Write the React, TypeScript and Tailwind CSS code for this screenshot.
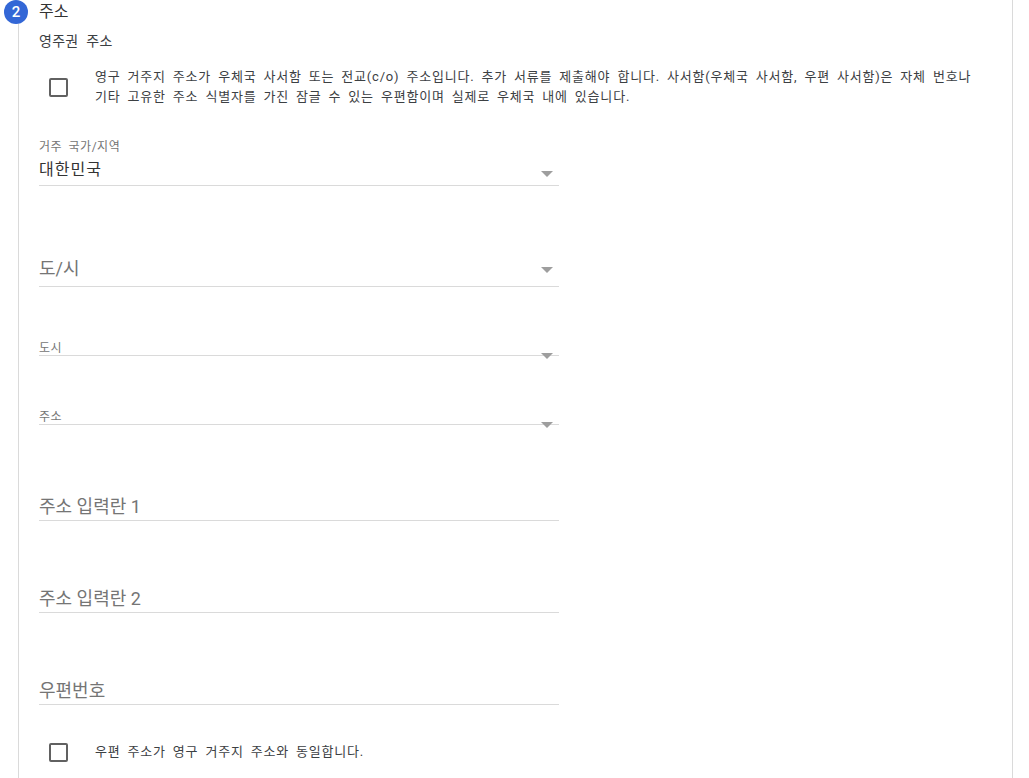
import React from "react";

const FONT = { fontFamily: 'Roboto, "Noto Sans CJK KR", sans-serif' };

function Arrow({ className = "" }: { className?: string }) {
  return (
    <svg
      width="12"
      height="6"
      viewBox="0 0 12 6"
      className={`absolute right-[6px] ${className}`}
    >
      <path d="M0 0 L12 0 L6 6 Z" fill="#9e9e9e" />
    </svg>
  );
}

function Checkbox() {
  return (
    <span className="block h-[19px] w-[19px] shrink-0 rounded-[2px] border-2 border-[#616161] bg-white" />
  );
}

// small floating label, as on a filled select
function Label({ text, className = "" }: { text: string; className?: string }) {
  return (
    <div
      className={`text-[12px] tracking-[0.5px] text-[#757575] [word-spacing:3px] ${className}`}
    >
      {text}
    </div>
  );
}

function SelectField({
  label,
  value,
  className = "",
}: {
  label: string;
  value: string;
  className?: string;
}) {
  return (
    <div
      className={`relative w-[520px] border-b border-[#dadada] pb-[3px] ${className}`}
    >
      <Label text={label} className="leading-4" />
      <div className="mt-[3px] text-[16px] leading-6 tracking-[1px] text-[#333]">
        {value}
      </div>
      <Arrow className="top-[32px]" />
    </div>
  );
}

function PlaceholderSelect({
  text,
  className = "",
}: {
  text: string;
  className?: string;
}) {
  return (
    <div
      className={`relative w-[520px] border-b border-[#dadada] pb-[5px] ${className}`}
    >
      <div className="text-[18px] leading-6 text-[#757575]">{text}</div>
      <Arrow className="top-[10px]" />
    </div>
  );
}

function LabelOnlySelect({
  label,
  className = "",
}: {
  label: string;
  className?: string;
}) {
  return (
    <div className={`relative w-[520px] border-b border-[#dadada] ${className}`}>
      <Label text={label} className="pt-[3px] leading-[13px]" />
      <Arrow className="top-[14px]" />
    </div>
  );
}

function TextField({
  placeholder,
  className = "",
}: {
  placeholder: string;
  className?: string;
}) {
  return (
    <div
      className={`w-[520px] border-b border-[#dadada] pb-[1px] text-[18px] leading-6 text-[#757575] ${className}`}
    >
      {placeholder}
    </div>
  );
}

export default function App() {
  return (
    <div className="h-[778px] w-[1029px] overflow-hidden bg-white" style={FONT}>
      <div className="h-[778px] w-[1013px] border-r border-[#dadada]">
        {/* step header */}
        <div className="flex h-6 items-center">
          <span className="ml-[4px] flex h-6 w-6 items-center justify-center rounded-full bg-[#3367d6] text-[15px] font-medium text-white">
            2
          </span>
          <span className="ml-[11px] text-[16px] text-[#333]">주소</span>
        </div>

        <div className="ml-[18px] border-l border-[#dadada] pb-10 pl-[20px]">
          <div className="pt-[7px] text-[14px] leading-5 tracking-[0.3px] text-[#3c4043] [word-spacing:4px]">
            영주권 주소
          </div>

          <div className="mt-4 flex items-center">
            <div className="pl-[10px]">
              <Checkbox />
            </div>
            <div className="ml-[27px] text-[13px] leading-5 tracking-[0.8px] text-[#3c4043] [word-spacing:3px]">
              <div className="whitespace-nowrap">
                영구 거주지 주소가 우체국 사서함 또는 전교(c/o) 주소입니다. 추가
                서류를 제출해야 합니다. 사서함(우체국 사서함, 우편 사서함)은 자체
                번호나
              </div>
              <div className="whitespace-nowrap">
                기타 고유한 주소 식별자를 가진 잠글 수 있는 우편함이며 실제로
                우체국 내에 있습니다.
              </div>
            </div>
          </div>

          <SelectField label="거주 국가/지역" value="대한민국" className="mt-[32px]" />
          <PlaceholderSelect text="도/시" className="mt-[71px]" />
          <LabelOnlySelect label="도시" className="mt-[52px]" />
          <LabelOnlySelect label="주소" className="mt-[52px]" />
          <TextField placeholder="주소 입력란 1" className="mt-[70px]" />
          <TextField placeholder="주소 입력란 2" className="mt-[66px]" />
          <TextField placeholder="우편번호" className="mt-[66px]" />

          <div className="mt-[37px] flex items-center">
            <div className="pl-[10px]">
              <Checkbox />
            </div>
            <div className="ml-[27px] text-[13px] leading-5 tracking-[0.8px] text-[#3c4043] [word-spacing:3px]">
              우편 주소가 영구 거주지 주소와 동일합니다.
            </div>
          </div>
        </div>
      </div>
    </div>
  );
}
